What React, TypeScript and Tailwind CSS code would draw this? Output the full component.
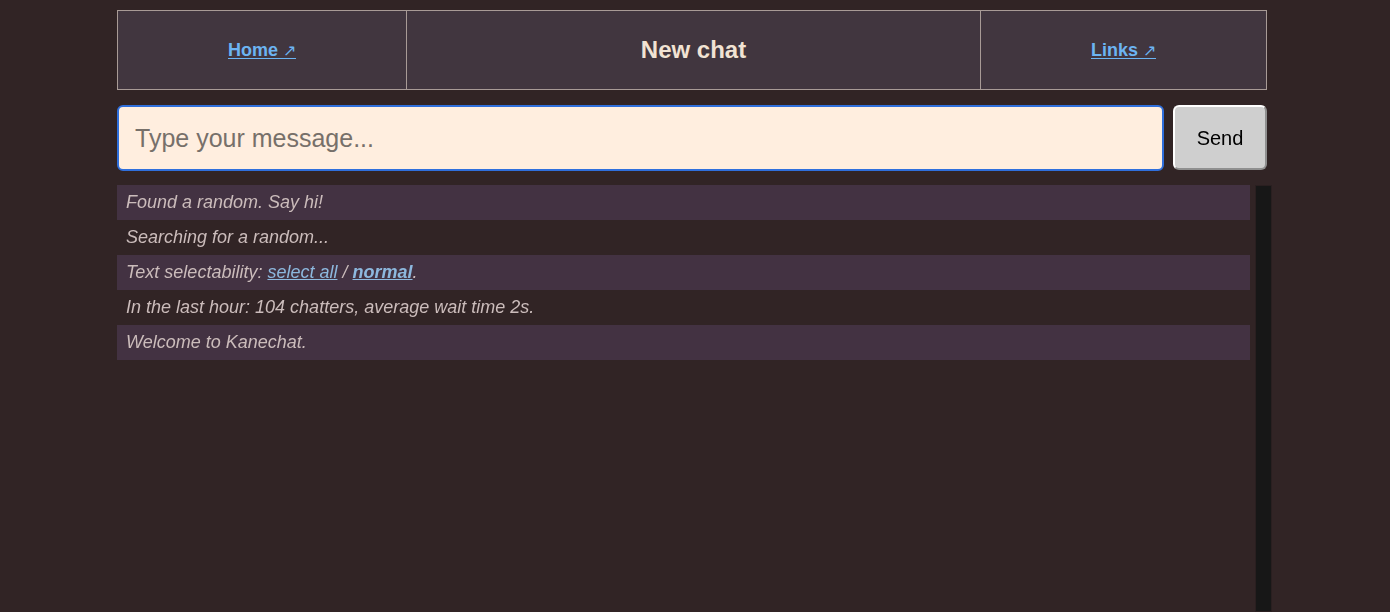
const messages = [
  { key: 'found', node: <>Found a random. Say hi!</> },
  { key: 'search', node: <>Searching for a random...</> },
  {
    key: 'select',
    node: (
      <>
        Text selectability:{' '}
        <a href="#" className="text-[#8db8de] underline">
          select all
        </a>{' '}
        /{' '}
        <a href="#" className="font-bold text-[#8db8de] underline">
          normal
        </a>
        .
      </>
    ),
  },
  { key: 'stats', node: <>In the last hour: 104 chatters, average wait time 2s.</> },
  { key: 'welcome', node: <>Welcome to Kanechat.</> },
];

function NavLink({ label }: { label: string }) {
  return (
    <a href="#" className="text-[18px] font-bold text-[#6cb4f2] underline underline-offset-2">
      {label} <span className="text-[16px] font-normal">↗</span>
    </a>
  );
}

export default function App() {
  return (
    <div className="flex h-[612px] flex-col overflow-hidden bg-[#312425] font-['Liberation_Sans',Arial,sans-serif]">
      <div className="ml-[117px] flex w-[1150px] flex-1 flex-col pt-[10px]">
        <div className="grid h-[80px] grid-cols-[289px_574px_1fr] border border-[#a89b96] bg-[#41363f]">
          <div className="flex items-center justify-center border-r border-[#a89b96]">
            <NavLink label="Home" />
          </div>
          <div className="flex items-center justify-center border-r border-[#a89b96]">
            <h1 className="text-[24px] font-bold text-[#f1e3d3]">New chat</h1>
          </div>
          <div className="flex items-center justify-center">
            <NavLink label="Links" />
          </div>
        </div>

        <div className="mt-[15px] flex h-[66px] gap-[9px]">
          <input
            autoFocus
            placeholder="Type your message..."
            className="h-full flex-1 rounded-[6px] border-2 border-[#2f6fdc] bg-[#ffeedf] px-[16px] text-[25px] text-black outline-none placeholder:text-[#77706a]"
          />
          <button
            type="button"
            className="h-[65px] w-[94px] rounded-[6px] border-2 border-b-[#8f8f8f] border-l-white border-r-[#8f8f8f] border-t-white bg-[#cfcfcf] text-[20px] text-black"
          >
            Send
          </button>
        </div>

        <div className="mt-[14px] flex min-h-0 w-[1155px] flex-1">
          <div className="flex-1 pr-[5px]">
            {messages.map((m, i) => (
              <div
                key={m.key}
                className={`px-[9px] py-[7px] text-[18px] italic leading-[21px] text-[#cbbcbb] ${
                  i % 2 === 0 ? 'bg-[#433242]' : ''
                }`}
              >
                {m.node}
              </div>
            ))}
          </div>
          <div className="w-[17px] border border-[#2a1f20] bg-[#171717]" />
        </div>
      </div>
    </div>
  );
}
